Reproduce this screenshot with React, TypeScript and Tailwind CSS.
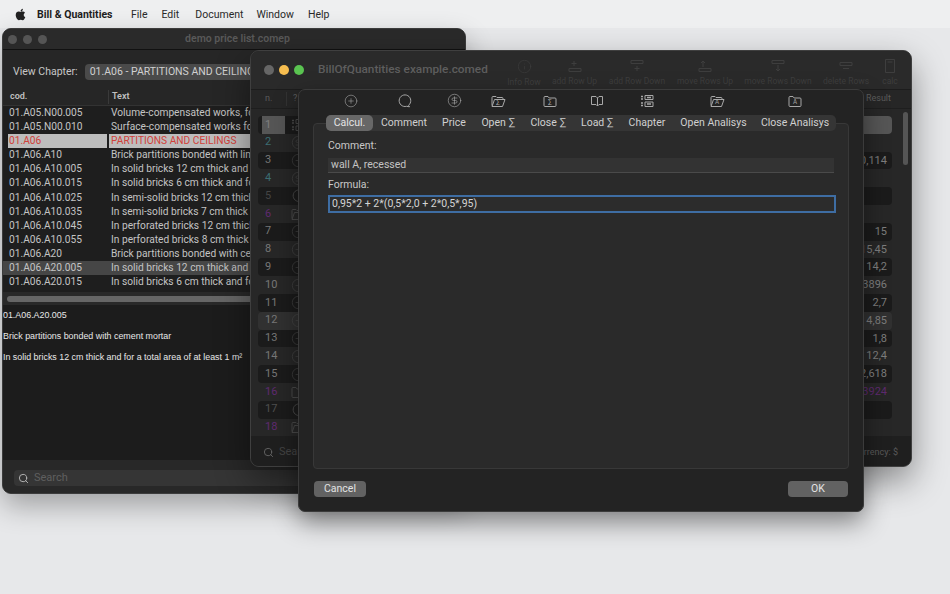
import { FaApple } from "react-icons/fa";
import { CirclePlus, CircleDollarSign, Info, Search } from "lucide-react";

const Ic = ({ children, w = 16, h = 14 }: { children: React.ReactNode; w?: number; h?: number }) => (
  <svg width={w} height={h} viewBox="0 0 16 14" fill="none" stroke="currentColor" strokeWidth="1" className="shrink-0">
    {children}
  </svg>
);

const Mini = ({ t }: { t: string }) => (
  <text x="8" y="10.4" fontSize="6" textAnchor="middle" fill="currentColor" stroke="none" fontFamily="Inter, sans-serif">{t}</text>
);

const FolderClosed = ({ t }: { t: string }) => (
  <Ic><path d="M2 3.5a1 1 0 0 1 1-1h3l1.2 1.5H13a1 1 0 0 1 1 1v6.5a1 1 0 0 1-1 1H3a1 1 0 0 1-1-1z" /><Mini t={t} /></Ic>
);
const FolderOpen = ({ t }: { t: string }) => (
  <Ic><path d="M2 11.5V3.5a1 1 0 0 1 1-1h3l1 1h5a1 1 0 0 1 1 1V5M2 12.5h10.5L15 5.5H4.500L2 12.500z" /><Mini t={t} /></Ic>
);
const Bubble = () => (
  <Ic><path d="M12.500 11.300A5.800 5.800 0 1 0 10.500 12.300L13.500 12.800z" /></Ic>
);
const Book = () => (
  <Ic><path d="M2.500 2.500h4.500l1.500 1.500v8L7 10.500H2.500zM8.500 4l1.500-1.500h3.500v8H10L8.500 12" /><Mini t="" /></Ic>
);
const ListGrid = () => (
  <Ic><path d="M6 1.500h8v4H6zM6 8h8v4.500H6z" /><path d="M2 2.500h2M2 5h2M2 9h2M2 11.500h2M8 3.500h4M8 10h4" strokeWidth="1.300" /></Ic>
);

const cod = [
  ["01.A05.N00.005", "Volume-compensated works, fo"],
  ["01.A05.N00.010", "Surface-compensated works fo"],
  ["01.A06", "PARTITIONS AND CEILINGS"],
  ["01.A06.A10", "Brick partitions bonded with lim"],
  ["01.A06.A10.005", "In solid bricks 12 cm thick and f"],
  ["01.A06.A10.015", "In solid bricks 6 cm thick and fo"],
  ["01.A06.A10.025", "In semi-solid bricks 12 cm thick"],
  ["01.A06.A10.035", "In semi-solid bricks 7 cm thick"],
  ["01.A06.A10.045", "In perforated bricks 12 cm thick"],
  ["01.A06.A10.055", "In perforated bricks 8 cm thick"],
  ["01.A06.A20", "Brick partitions bonded with ce"],
  ["01.A06.A20.005", "In solid bricks 12 cm thick and f"],
  ["01.A06.A20.015", "In solid bricks 6 cm thick and fo"],
];

function PriceWindow() {
  return (
    <div className="absolute left-[2px] top-[28px] flex h-[466px] w-[464px] flex-col overflow-hidden rounded-[9px] border border-[#3c3c3c] bg-[#212121] shadow-[0_12px_28px_rgba(0,0,0,0.3)]">
      <div className="relative flex h-[21px] shrink-0 items-center border-b border-[#111] bg-[#2a2a2a] pl-[5px]">
        <div className="flex gap-[6px]">
          <span className="size-[9px] rounded-full bg-[#555]" />
          <span className="size-[9px] rounded-full bg-[#555]" />
          <span className="size-[9px] rounded-full bg-[#555]" />
        </div>
        <div className="flex-1 pr-[37px] text-center text-[10.500px] font-semibold text-[#595959]">demo price list.comep</div>
      </div>
      <div className="flex h-[36px] shrink-0 items-center gap-[7px] bg-[#262626] pl-[10px] pt-[8px]">
        <span className="text-[10.500px] text-[#c6c6c6]">View Chapter:</span>
        <div className="flex h-[16px] w-[168px] items-center overflow-hidden whitespace-nowrap rounded-[4px] bg-[#4a4a4a] pl-[5px] text-[10.500px] text-[#d0d0d0]">
          01.A06 - PARTITIONS AND CEILINGS
        </div>
      </div>
      <div className="flex h-[20px] shrink-0 items-center border-b border-[#333] bg-[#262626] pt-[3px] text-[9px] font-semibold text-[#c0c0c0]">
        <span className="w-[105px] pl-[7px]">cod.</span>
        <span className="border-l border-[#3a3a3a] pl-[3px]">Text</span>
      </div>
      <div className="flex shrink-0 flex-col bg-[#1e1e1e] pb-[3px]">
        {cod.map(([c, t]) => {
          const sel = c === "01.A06";
          const hi = c === "01.A06.A20.005";
          return (
            <div key={c} className={`flex h-[14.1px] items-center whitespace-nowrap text-[10.200px] ${hi ? "bg-[#464646]" : ""} ${sel ? "text-[#d2413a]" : "text-[#c4c4c4]"}`}>
              <span className={`ml-[5px] h-full w-[99px] pl-[1px] leading-[14px] ${sel ? "bg-[#bdbdbd]" : ""}`}>{c}</span>
              <span className={`ml-[2px] h-full w-[141px] overflow-hidden pl-[2px] leading-[14px] ${sel ? "bg-[#bdbdbd]" : ""}`}>{t}</span>
            </div>
          );
        })}
      </div>
      <div className="flex h-[13px] shrink-0 items-center bg-[#292929] px-[4px]">
        <div className="h-[6px] w-full rounded-full bg-[#666]" />
      </div>
      <div style={{ fontFamily: "'Liberation Sans', sans-serif" }} className="flex flex-1 flex-col gap-[10px] bg-[#1c1c1c] pt-[5px] text-[8.900px] text-[#e8e8e8]">
        <span className="leading-[11px]">01.A06.A20.005</span>
        <span className="leading-[11px]">Brick partitions bonded with cement mortar</span>
        <span className="leading-[11px]">In solid bricks 12 cm thick and for a total area of at least 1 m²</span>
      </div>
      <div className="flex h-[33px] shrink-0 items-center bg-[#282828] px-[11px] pt-[3px]">
        <div className="flex h-[16px] w-full items-center gap-[5px] rounded-[4px] bg-[#353535] pl-[4px]">
          <Search size={11} strokeWidth={2} className="text-[#bbb]" />
          <span className="text-[11px] text-[#5f5f5f]">Search</span>
        </div>
      </div>
    </div>
  );
}

const tools: { label: string; w: string; icon: React.ReactNode }[] = [
  { label: "Info Row", w: "w-[50px]", icon: <Info size={15} strokeWidth={1} /> },
  { label: "add Row Up", w: "w-[51px]", icon: <Ic><path d="M2 9.500h12v3H2zM7 2v5M4.500 4.500h5" /></Ic> },
  { label: "add Row Down", w: "w-[74px]", icon: <Ic><path d="M2 1.500h12v3H2zM8 7v5M5.500 9.500h5" /></Ic> },
  { label: "move Rows Up", w: "w-[62px]", icon: <Ic><path d="M2 9.500h12v3H2zM6 8V2M4 4l2-2 2 2" /></Ic> },
  { label: "move Rows Down", w: "w-[84px]", icon: <Ic><path d="M2 1.500h12v3H2zM8 6v6M6 10l2 2 2-2" /></Ic> },
  { label: "delete Rows", w: "w-[52px]", icon: <Ic><path d="M2 3.500h12v3H2zM5 9.500h6" /></Ic> },
  { label: "calc", w: "w-[36px]", icon: <Ic><path d="M3.500 0.500h9v13h-9zM5.500 3h5" /></Ic> },
];

const rows: { n: number; c: string; icon: "grid" | "$" | "+" | "b" | "fo" | "f"; v?: string; vc?: string }[] = [
  { n: 1, c: "text-[#7e7e7e]", icon: "grid", v: "" },
  { n: 2, c: "text-[#3c6d72]", icon: "$" },
  { n: 3, c: "text-[#777]", icon: "+", v: "0,114" },
  { n: 4, c: "text-[#3c6d72]", icon: "$" },
  { n: 5, c: "text-[#454545]", icon: "b", v: "" },
  { n: 6, c: "text-[#5f2a70]", icon: "fo" },
  { n: 7, c: "text-[#777]", icon: "+", v: "15" },
  { n: 8, c: "text-[#777]", icon: "+", v: "15,45" },
  { n: 9, c: "text-[#777]", icon: "+", v: "14,2" },
  { n: 10, c: "text-[#777]", icon: "+", v: "3896" },
  { n: 11, c: "text-[#777]", icon: "+", v: "2,7" },
  { n: 12, c: "text-[#777]", icon: "+", v: "4,85" },
  { n: 13, c: "text-[#777]", icon: "+", v: "1,8" },
  { n: 14, c: "text-[#777]", icon: "+", v: "12,4" },
  { n: 15, c: "text-[#777]", icon: "+", v: "2,618" },
  { n: 16, c: "text-[#5f2a70]", icon: "f", v: "3924", vc: "text-[#5f2a70]" },
  { n: 17, c: "text-[#4f4f4f]", icon: "b", v: "" },
  { n: 18, c: "text-[#5f2a70]", icon: "fo" },
];

function RowIcon({ k }: { k: string }) {
  if (k === "$") return <CircleDollarSign size={15} strokeWidth={1} />;
  if (k === "+") return <CirclePlus size={15} strokeWidth={1} />;
  if (k === "b") return <Bubble />;
  if (k === "f") return <FolderClosed t="" />;
  if (k === "fo") return <FolderOpen t="" />;
  return <ListGrid />;
}

function QuantitiesWindow() {
  return (
    <div className="absolute left-[250px] top-[50px] flex h-[417px] w-[662px] flex-col overflow-hidden rounded-[9px] border border-[#3f3f3f] bg-[#282828] shadow-[0_14px_34px_rgba(0,0,0,0.42)]">
      <div className="flex h-[39px] shrink-0 items-center border-b border-[#1c1c1c] bg-[#2a2a2a]">
        <div className="ml-[13px] flex gap-[5px]">
          <span className="size-[10px] rounded-full bg-[#666]" />
          <span className="size-[10px] rounded-full bg-[#f6bd4f]" />
          <span className="size-[10px] rounded-full bg-[#5ac451]" />
        </div>
        <span className="ml-[14px] w-[181px] whitespace-nowrap text-[11.800px] font-medium text-[#5e5e5e]">BillOfQuantities example.comed</span>
        <div className="flex pt-[6px]">
          {tools.map((t) => (
            <div key={t.label} className={`${t.w} flex flex-col items-center gap-[3px] text-[#3e3e3e]`}>
              {t.icon}
              <span className="whitespace-nowrap text-[8.500px] leading-[10px]">{t.label}</span>
            </div>
          ))}
        </div>
      </div>
      <div className="flex h-[19px] shrink-0 items-center border-b border-[#1e1e1e] bg-[#262626] text-[9px] text-[#5c5c5c]">
        <span className="w-[36px] border-r border-[#333] pl-[14px]">n.</span>
        <span className="w-[560px] pl-[6px]">?</span>
        <span className="w-[44px] text-right">Result</span>
      </div>
      <div className="relative flex flex-1 flex-col bg-[#272727] pt-[7px] pl-[7px] pr-[19px]">
        <div className="absolute right-[3px] top-[3px] h-[53px] w-[5px] rounded-full bg-[#555]" />
        {rows.map((r) => (
          <div key={r.n} className={`flex h-[17.800px] shrink-0 items-center rounded-[4px] ${r.n % 2 && r.n < 18 ? "bg-[#1b1b1b]" : ""} ${r.n === 12 ? "bg-[#313131]" : ""}`}>
            <span className={`ml-[4px] flex h-full w-[23px] items-center pl-[3px] text-[11px] ${r.c} ${r.n === 1 ? "bg-[#565656]" : ""}`}>{r.n}</span>
            <span className="ml-[5px] flex w-[16px] justify-center text-[#4a4a4a]"><RowIcon k={r.icon} /></span>
            <span className={`h-full flex-1 rounded-r-[4px] pr-[5px] text-right text-[11px] leading-[18px] ${r.vc ?? "text-[#7e7e7e]"} ${r.n === 1 ? "bg-[#565656]" : ""}`}>{r.v}</span>
          </div>
        ))}
      </div>
      <div className="flex h-[32px] shrink-0 items-center justify-between bg-[#1f1f1f] pl-[12px] pr-[13px] text-[9px] text-[#5a5a5a]">
        <div className="flex items-center gap-[5px]">
          <Search size={11} strokeWidth={2} className="text-[#666]" />
          <span className="text-[11px] text-[#444]">Search</span>
        </div>
        <span>Currency: $</span>
      </div>
    </div>
  );
}

const tabs: { label: string; w: string; iconClass: string; icon: React.ReactNode }[] = [
  { label: "Calcul.", w: "w-[47px]", iconClass: "pl-[3px]", icon: <CirclePlus size={14} strokeWidth={1} /> },
  { label: "Comment", w: "w-[62px]", iconClass: "", icon: <Bubble /> },
  { label: "Price", w: "w-[38px]", iconClass: "", icon: <CircleDollarSign size={15} strokeWidth={1} /> },
  { label: "Open ∑", w: "w-[50px]", iconClass: "", icon: <FolderOpen t="∑" /> },
  { label: "Close ∑", w: "w-[50px]", iconClass: "pl-[4px]", icon: <FolderClosed t="∑" /> },
  { label: "Load ∑", w: "w-[48px]", iconClass: "", icon: <Book /> },
  { label: "Chapter", w: "w-[52px]", iconClass: "", icon: <ListGrid /> },
  { label: "Open Analisys", w: "w-[81px]", iconClass: "pl-[7px]", icon: <FolderOpen t="A" /> },
  { label: "Close Analisys", w: "w-[82px]", iconClass: "", icon: <FolderClosed t="A" /> },
];

function Sheet() {
  return (
    <div className="absolute left-[298px] top-[89px] flex h-[423px] w-[566px] flex-col rounded-[7px] border border-[#3b3b3b] bg-[#232323] px-[14px] shadow-[0_10px_26px_rgba(0,0,0,0.45)]">
      <div className="ml-[13px] flex h-[25px] shrink-0 items-center pb-[4px] text-[#a8a8a8]">
        {tabs.map((t) => (
          <div key={t.label} className={`${t.w} ${t.iconClass} flex justify-center`}>{t.icon}</div>
        ))}
      </div>
      <div className="relative z-10 -mb-[8px] ml-[13px] flex h-[16px] w-[510px] shrink-0 items-center rounded-[5px] bg-[#353535] text-[10.500px] text-[#d0d0d0]">
        {tabs.map((t, i) => (
          <div key={t.label} className={`${t.w} flex h-full items-center justify-center whitespace-nowrap rounded-[5px] ${i === 0 ? "bg-[#676767] text-[#e4e4e4]" : ""}`}>{t.label}</div>
        ))}
      </div>
      <div className="flex h-[346px] w-[536px] shrink-0 flex-col rounded-[4px] border border-[#383838] bg-[#2a2a2a] px-[14px] pt-[15px]">
        <span className="text-[10.500px] leading-[14px] text-[#c8c8c8]">Comment:</span>
        <div className="mt-[5px] flex h-[15px] w-[506px] items-center border-b border-[#4a4a4a] bg-[#333] pl-[3px] text-[10.500px] text-[#c4c4c4]">wall A, recessed</div>
        <span className="mt-[5px] text-[10.500px] leading-[14px] text-[#c8c8c8]">Formula:</span>
        <div className="mt-[3px] flex h-[18px] w-[508px] items-center border-2 border-[#3e6da3] bg-[#2c2c2c] pl-[2px] text-[10.500px] text-[#d4d4d4]">0,95*2 + 2*(0,5*2,0 + 2*0,5*,95)</div>
      </div>
      <div className="mt-[12px] flex w-[535px] justify-between">
        <button className="ml-[1px] h-[16px] w-[52px] rounded-[4px] bg-[#626262] text-[10.500px] leading-[16px] text-[#e2e2e2]">Cancel</button>
        <button className="h-[16px] w-[60px] rounded-[4px] bg-[#626262] text-[10.500px] leading-[16px] text-[#e2e2e2]">OK</button>
      </div>
    </div>
  );
}

export default function App() {
  return (
    <div style={{ fontFamily: "Roboto, sans-serif" }} className="relative h-[594px] w-[950px] overflow-hidden bg-[#e7e8ea]">
      <div className="flex h-[28px] items-center bg-[#eeeff0] pl-[14px] pt-[1px] text-[10.500px] text-[#2a2a2a]">
        <FaApple size={13} className="text-[#222]" />
        <span className="ml-[10px] w-[78px] whitespace-nowrap font-bold text-[#1e1e1e]">Bill &amp; Quantities</span>
        <span className="ml-[16px]">File</span>
        <span className="ml-[14px]">Edit</span>
        <span className="ml-[16px]">Document</span>
        <span className="ml-[13px]">Window</span>
        <span className="ml-[14px]">Help</span>
      </div>
      <PriceWindow />
      <QuantitiesWindow />
      <Sheet />
    </div>
  );
}
